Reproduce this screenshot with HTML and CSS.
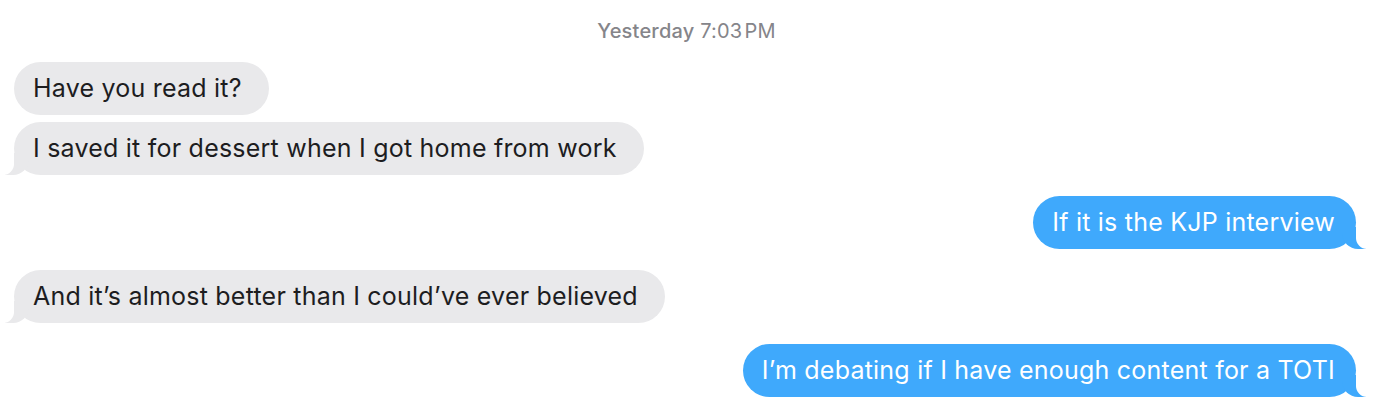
FILE: index.html
```html
<!DOCTYPE html>
<html>
<head>
<meta charset="utf-8">
<link rel="stylesheet" href="styles.css">
</head>
<body>
<div class="thread">
  <div class="stamp"><span class="day">Yesterday</span> 7:03&#8202;PM</div>
  <div class="row in"><div class="bubble">Have you read it?</div></div>
  <div class="row in tight"><div class="bubble tail">I saved it for dessert when I got home from work</div></div>
  <div class="row out"><div class="bubble tail">If it is the KJP interview</div></div>
  <div class="row in"><div class="bubble tail">And it’s almost better than I could’ve ever believed</div></div>
  <div class="row out"><div class="bubble tail">I’m debating if I have enough content for a TOTI</div></div>
</div>
</body>
</html>
```
FILE: styles.css
```css
html, body {
  margin: 0;
  padding: 0;
  background: #ffffff;
}
body {
  width: 1374px;
  height: 416px;
  overflow: hidden;
  font-family: "Inter", "Liberation Sans", sans-serif;
}
.thread {
  display: flex;
  flex-direction: column;
  padding: 19px 18px 0 14px;
}
.stamp {
  text-align: center;
  font-size: 20px;
  line-height: 24px;
  color: #85858a;
  padding-left: 3px;
  margin-bottom: 19px;
  letter-spacing: 0.2px;
}
.stamp .day {
  font-weight: 500;
}
.row {
  display: flex;
  margin-top: 21px;
}
.row:nth-child(2) {
  margin-top: 0;
}
.row.tight {
  margin-top: 7px;
}
.row.in { justify-content: flex-start; }
.row.out { justify-content: flex-end; }
.bubble {
  position: relative;
  font-size: 25px;
  line-height: 29px;
  padding: 12px 27px 12px 19px;
  border-radius: 27px;
  background: #e9e9eb;
  color: #1d1d1f;
  letter-spacing: 0.22px;
  z-index: 0;
}
.out .bubble {
  background: #3fa9fc;
  color: #ffffff;
  padding-right: 21px;
}
.bubble.tail {
  isolation: isolate;
}
.bubble.tail::before,
.bubble.tail::after {
  content: "";
  position: absolute;
  bottom: 0;
}
.in .bubble.tail::before {
  left: -9px;
  width: 24px;
  height: 22px;
  background: #e9e9eb;
  border-bottom-right-radius: 16px;
  z-index: 0;
}
.in .bubble.tail::after {
  left: -14px;
  width: 14px;
  height: 22px;
  background: #ffffff;
  border-bottom-right-radius: 11px;
  z-index: 1;
}
.out .bubble.tail::before {
  right: -10px;
  width: 24px;
  height: 22px;
  background: #3fa9fc;
  border-bottom-left-radius: 16px;
  z-index: 0;
}
.out .bubble.tail::after {
  right: -15px;
  width: 15px;
  height: 22px;
  background: #ffffff;
  border-bottom-left-radius: 11px;
  z-index: 1;
}
```
